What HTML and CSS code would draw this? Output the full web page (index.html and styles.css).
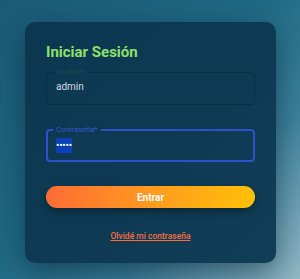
FILE: index.html
```html
<!DOCTYPE html>
<html lang="es">
<head>
<meta charset="utf-8">
<title>Iniciar Sesión</title>
<link rel="stylesheet" href="styles.css">
</head>
<body>
<main class="card">
  <h1 class="title">Iniciar Sesión</h1>
  <fieldset class="field">
    <legend class="label">Usuario*</legend>
    <input class="input" type="text" value="admin">
  </fieldset>
  <fieldset class="field field-focus">
    <legend class="label">Contraseña*</legend>
    <div class="pw"><span class="pw-sel">•••••</span></div>
  </fieldset>
  <button class="btn" type="button">Entrar</button>
  <a class="link" href="#">Olvidé mi contraseña</a>
</main>
</body>
</html>
```
FILE: styles.css
```css
html, body {
  margin: 0;
  height: 100%;
}
body {
  font-family: Roboto, "Liberation Sans", sans-serif;
  background: linear-gradient(135deg, #1b5a76 0%, #1f6984 45%, #3a7f99 70%, #92b8c6 100%);
  padding: 22px 24px 0 25px;
  box-sizing: border-box;
}
.card {
  width: 251px;
  height: 241px;
  box-sizing: border-box;
  padding: 21px 21px 0 21px;
  border-radius: 10px;
  background: linear-gradient(135deg, #0b3850 0%, #0e3b53 60%, #113e57 100%);
  box-shadow: 0 10px 28px rgba(0, 20, 35, 0.45);
  display: flex;
  flex-direction: column;
}
.title {
  margin: 0 0 7px;
  font-size: 15px;
  line-height: 18px;
  font-weight: 700;
  color: #8fe06b;
}
.field {
  margin: 0;
  padding: 5px 8px 11px 6px;
  border: 1px solid #0a2e42;
  border-radius: 4px;
  min-width: 0;
}
.field-focus {
  margin-top: 21px;
  padding: 4px 7px 7px 5px;
  border: 2px solid #2d50cc;
}
.label {
  padding: 0 3px;
  font-size: 7.5px;
  line-height: 8px;
  color: #264659;
}
.field-focus .label {
  color: #3457d2;
}
.input {
  display: block;
  box-sizing: border-box;
  width: 100%;
  height: 12px;
  padding: 0 0 0 3px;
  border: 0;
  outline: none;
  background: transparent;
  font-family: inherit;
  font-size: 10px;
  line-height: 12px;
  color: #d3dbe1;
}
.pw {
  padding-left: 3px;
  height: 15px;
  display: flex;
}
.pw-sel {
  background: #0b3fb6;
  color: #ffffff;
  font-size: 10px;
  line-height: 15px;
  letter-spacing: -0.2px;
}
.btn {
  margin-top: 24px;
  height: 22px;
  border: 0;
  border-radius: 11px;
  background: linear-gradient(100deg, #ff6b35 0%, #ff9a1f 50%, #ffc107 100%);
  color: #ffffff;
  font-family: inherit;
  font-size: 10px;
  font-weight: 700;
  box-shadow: 0 4px 9px rgba(0, 0, 0, 0.35);
  padding: 0;
}
.link {
  margin-top: 23px;
  align-self: center;
  font-size: 8.5px;
  line-height: 10px;
  font-weight: 500;
  color: #ff6b3d;
  text-decoration: underline;
}
```
